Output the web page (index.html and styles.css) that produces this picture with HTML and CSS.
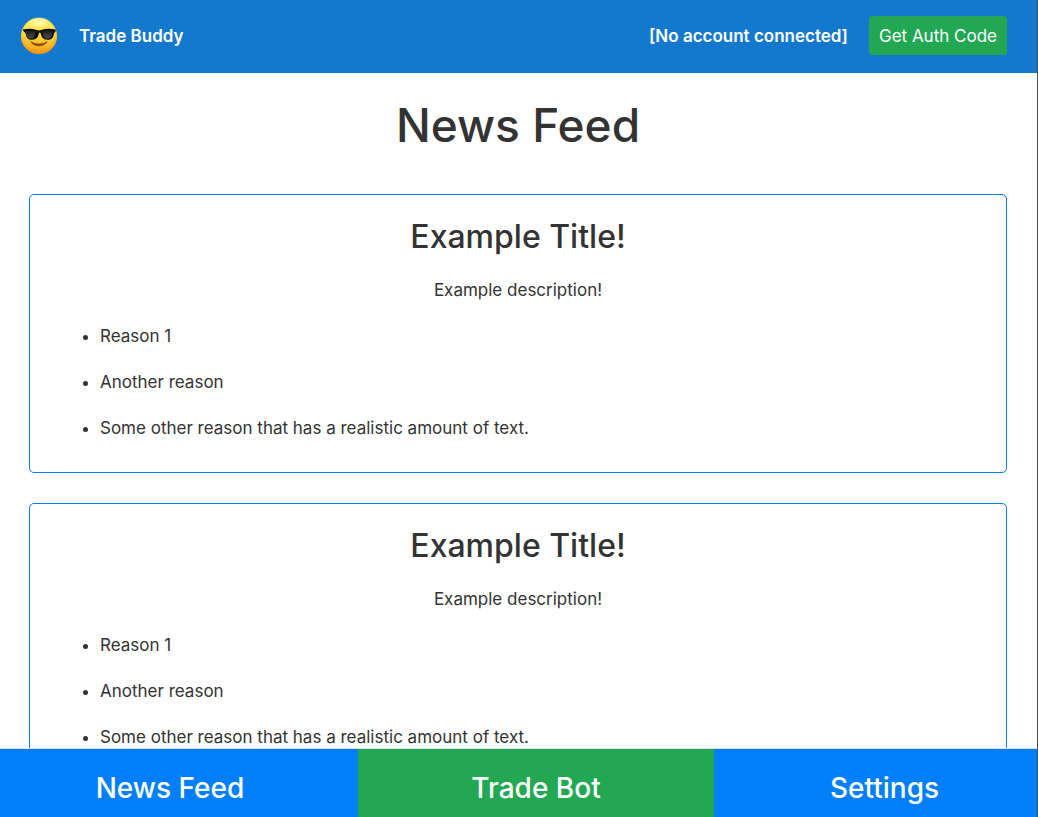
FILE: index.html
```html
<!DOCTYPE html>
<html lang="en">
<head>
<meta charset="utf-8">
<meta name="viewport" content="width=device-width, initial-scale=1">
<title>Trade Buddy</title>
<link rel="stylesheet" href="styles.css">
</head>
<body>
<div class="app">
  <header class="topbar">
    <svg class="logo" viewBox="0 0 38 38" aria-hidden="true">
      <defs>
        <linearGradient id="face" x1="0" y1="0" x2="0" y2="1">
          <stop offset="0" stop-color="#fff36f"/>
          <stop offset=".45" stop-color="#ffdc3c"/>
          <stop offset=".75" stop-color="#fdb92a"/>
          <stop offset="1" stop-color="#f39a14"/>
        </linearGradient>
        <radialGradient id="rim" cx=".5" cy=".44" r=".56">
          <stop offset=".75" stop-color="#f59a12" stop-opacity="0"/>
          <stop offset="1" stop-color="#ee8a0c" stop-opacity=".65"/>
        </radialGradient>
        <radialGradient id="shine" cx=".5" cy=".4" r=".5">
          <stop offset="0" stop-color="#fffde0" stop-opacity=".9"/>
          <stop offset="1" stop-color="#fff36f" stop-opacity="0"/>
        </radialGradient>
        <linearGradient id="lens" x1="0" y1="0" x2="0" y2="1">
          <stop offset="0" stop-color="#1c1c1c"/>
          <stop offset="1" stop-color="#4c4c4c"/>
        </linearGradient>
      </defs>
      <circle cx="19" cy="19" r="18" fill="url(#face)"/>
      <circle cx="19" cy="19" r="18" fill="url(#rim)"/>
      <ellipse cx="19" cy="7" rx="13" ry="7" fill="url(#shine)"/>
      <path d="M10.800 24.800q8.200 4.600 16.400 0q-2.600 4-8.200 4t-8.200-4z" fill="#8a4b08" stroke="#8a4b08" stroke-width=".8" stroke-linejoin="round"/>
      <path d="M2.500 12.300q8.500-1.800 14 .5q2.500.8 5 0q5.500-2.300 14-.5v2.400l-1.400.8c-.6 4.500-1.800 7-6.600 7c-4.600 0-6.200-3-6.900-6.700q-.8-1-1.600 0c-.7 3.700-2.300 6.700-6.900 6.700c-4.800 0-6-2.500-6.600-7l-1.400-.8z" transform="translate(0 .2)" fill="#0d0d0d"/>
      <path d="M5.500 14.300q5-1.200 10.100.2c-.2 4.300-1.700 7-4.900 7c-3.800 0-4.900-2.500-5.200-7.200z" fill="url(#lens)"/>
      <path d="M32.500 14.300q-5-1.200-10.100.2c.2 4.300 1.700 7 4.900 7c3.800 0 4.900-2.500 5.200-7.200z" fill="url(#lens)"/>
    </svg>
    <span class="brand">Trade Buddy</span>
    <span class="account">[No account connected]</span>
    <button class="auth" type="button">Get Auth Code</button>
  </header>

  <main class="feed">
    <h1 class="feed-title">News Feed</h1>
    <article class="card">
      <h2 class="card-title">Example Title!</h2>
      <p class="card-text">Example description!</p>
      <ul class="reasons">
        <li>Reason 1</li>
        <li>Another reason</li>
        <li>Some other reason that has a realistic amount of text.</li>
      </ul>
    </article>
    <article class="card">
      <h2 class="card-title">Example Title!</h2>
      <p class="card-text">Example description!</p>
      <ul class="reasons">
        <li>Reason 1</li>
        <li>Another reason</li>
        <li>Some other reason that has a realistic amount of text.</li>
      </ul>
    </article>
  </main>

  <nav class="tabs">
    <button class="tab tab-first" type="button">News Feed</button>
    <button class="tab tab-active" type="button">Trade Bot</button>
    <button class="tab tab-last" type="button">Settings</button>
  </nav>
</div>
</body>
</html>
```
FILE: styles.css
```css
* {
  box-sizing: border-box;
}

body {
  margin: 0;
  color: #333;
  font: 17px/26px Inter, "Liberation Sans", sans-serif;
}

button {
  border: 0;
  color: #fff;
  font: inherit;
  cursor: pointer;
}

.app {
  display: flex;
  flex-direction: column;
  height: 100vh;
  border-right: 1px solid #4a4a4a;
}

.topbar {
  display: flex;
  align-items: center;
  padding: 16px 30px 18px 20px;
  background: #1478cd;
  color: #fff;
  font-weight: 600;
}

.logo {
  width: 38px;
  height: 38px;
}

.brand {
  margin-left: 21px;
}

.account {
  margin-left: auto;
}

.auth {
  margin-left: 21px;
  padding: 7px 10px 6px;
  border-radius: 4px;
  background: #22a753;
  font-weight: 400;
}

.feed {
  flex: 1;
  min-height: 0;
  padding: 22px 30px 0 29px;
  overflow-y: auto;
  scrollbar-width: none;
}

.feed-title {
  margin: 0 0 39px;
  font-size: 46px;
  font-weight: 500;
  line-height: 60px;
  text-align: center;
}

.card {
  margin-bottom: 30px;
  padding: 20px 20px 31px;
  border: 1px solid #007ff9;
  border-radius: 5px;
}

.card-title {
  margin: 0 0 18px;
  font-size: 32px;
  font-weight: 500;
  line-height: 44px;
  text-align: center;
}

.card-text {
  margin: 0 0 20px;
  text-align: center;
}

.reasons {
  display: grid;
  gap: 20px;
  margin: 0;
  padding-left: 50px;
}

.tabs {
  display: grid;
  grid-template-columns: 358fr 356fr 323fr;
  border-top: 1px solid #ddd;
}

.tab {
  padding: 21px 0 11px;
  background: #007ff9;
  font-size: 28px;
  font-weight: 500;
  line-height: 36px;
}

.tab-first {
  padding-right: 18px;
}

.tab-active {
  background: #22a753;
}

.tab-last {
  padding-left: 18px;
}
```
